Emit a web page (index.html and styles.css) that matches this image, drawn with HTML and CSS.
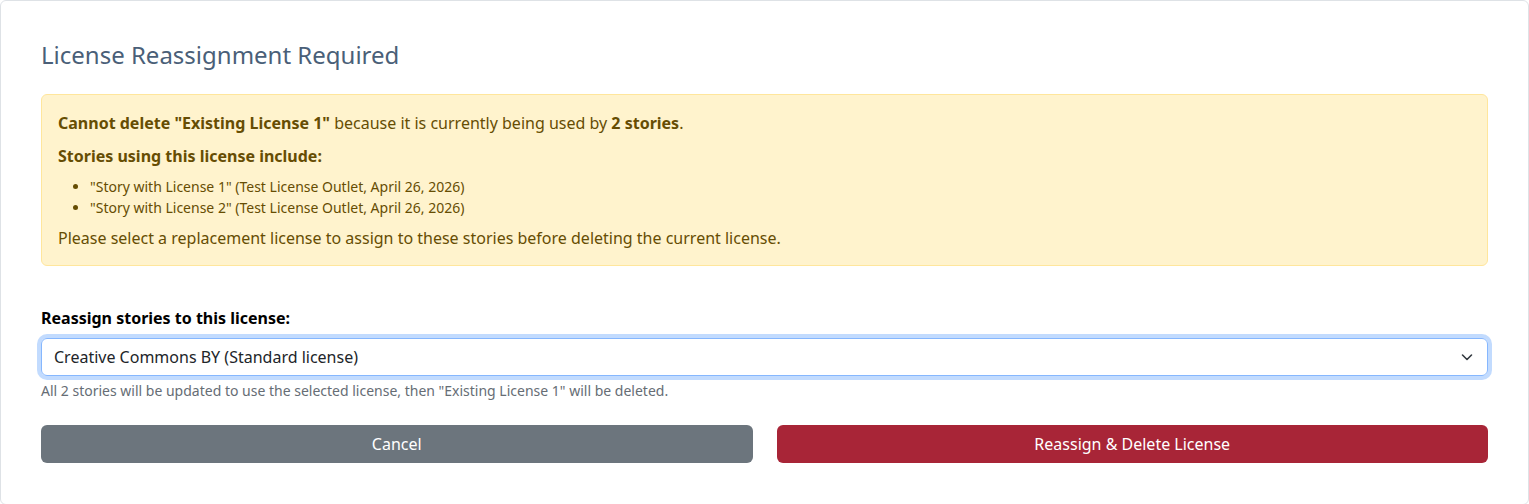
FILE: index.html
```html
<!DOCTYPE html>
<html lang="en">
<head>
  <meta charset="UTF-8" />
  <title>License Reassignment Required</title>
  <link rel="stylesheet" href="styles.css">
</head>
<body>
  <div class="tarjeta">
    <h2 class="titulo">License Reassignment Required</h2>

    <div class="alerta">
      <p class="linea-1"><strong>Cannot delete "Existing License 1"</strong> because it is currently being used by <strong>2 stories</strong>.</p>
      <p class="linea-2"><strong>Stories using this license include:</strong></p>
      <ul class="lista">
        <li>"Story with License 1" (Test License Outlet, April 26, 2026)</li>
        <li>"Story with License 2" (Test License Outlet, April 26, 2026)</li>
      </ul>
      <p>Please select a replacement license to assign to these stories before deleting the current license.</p>
    </div>

    <div class="grupo">
      <label class="etiqueta" for="licencia">Reassign stories to this license:</label>
      <div class="select">
        <span>Creative Commons BY (Standard license)</span>
        <svg width="16" height="16" viewBox="0 0 16 16"><path d="M3.5 6l4.5 4.5 4.5-4.5" fill="none" stroke="#343a40" stroke-width="1.6" stroke-linecap="round" stroke-linejoin="round"/></svg>
      </div>
      <div class="ayuda">All 2 stories will be updated to use the selected license, then "Existing License 1" will be deleted.</div>
    </div>

    <div class="botones">
      <button class="btn gris">Cancel</button>
      <button class="btn rojo">Reassign &amp; Delete License</button>
    </div>
  </div>
</body>
</html>
```

FILE: styles.css
```css
/* --------- Base --------- */
body { margin:0; font-family:"Noto Sans", sans-serif; font-size:16px; line-height:1.5; color:#212529; background:#fff }
.tarjeta {
  border:1px solid #dee2e6; border-radius:6px;
  padding:40px; height:423px; background:#fff
}
.titulo { margin:0 0 24px; font-size:24px; font-weight:400; line-height:1.2; color:#4a5f78 }

/* --------- Alerta --------- */
.alerta {
  background:#fff3cd; border:1px solid #ffe69c; color:#664d03;
  border-radius:6px; padding:16px 16px 15px; margin-bottom:40px
}
.alerta p { margin:0 0 8px }
.alerta .linea-1 { margin-bottom:9px }
.alerta p:last-child { margin:0 }
.alerta strong { font-weight:700 }
.lista { margin:0 0 8px; padding-left:32px; font-size:14px; line-height:21px }

/* --------- Formulario --------- */
.etiqueta { display:block; font-weight:700; margin-bottom:8px; color:#000 }
.select {
  display:flex; align-items:center; justify-content:space-between;
  height:38px; box-sizing:border-box; padding:0 12px;
  border:1px solid #86b7fe; border-radius:6px;
  box-shadow:0 0 0 4px rgba(13,110,253,.25);
  color:#212529
}
.ayuda { margin-top:4px; font-size:14px; line-height:21px; color:#666d75 }

.botones { display:flex; gap:24px; margin-top:24px }
.btn {
  flex:1; height:38px; border:none; border-radius:6px;
  font-family:inherit; font-size:16px; color:#fff; cursor:pointer
}
.gris { background:#6c757d }
.rojo { background:#a82537 }
```
